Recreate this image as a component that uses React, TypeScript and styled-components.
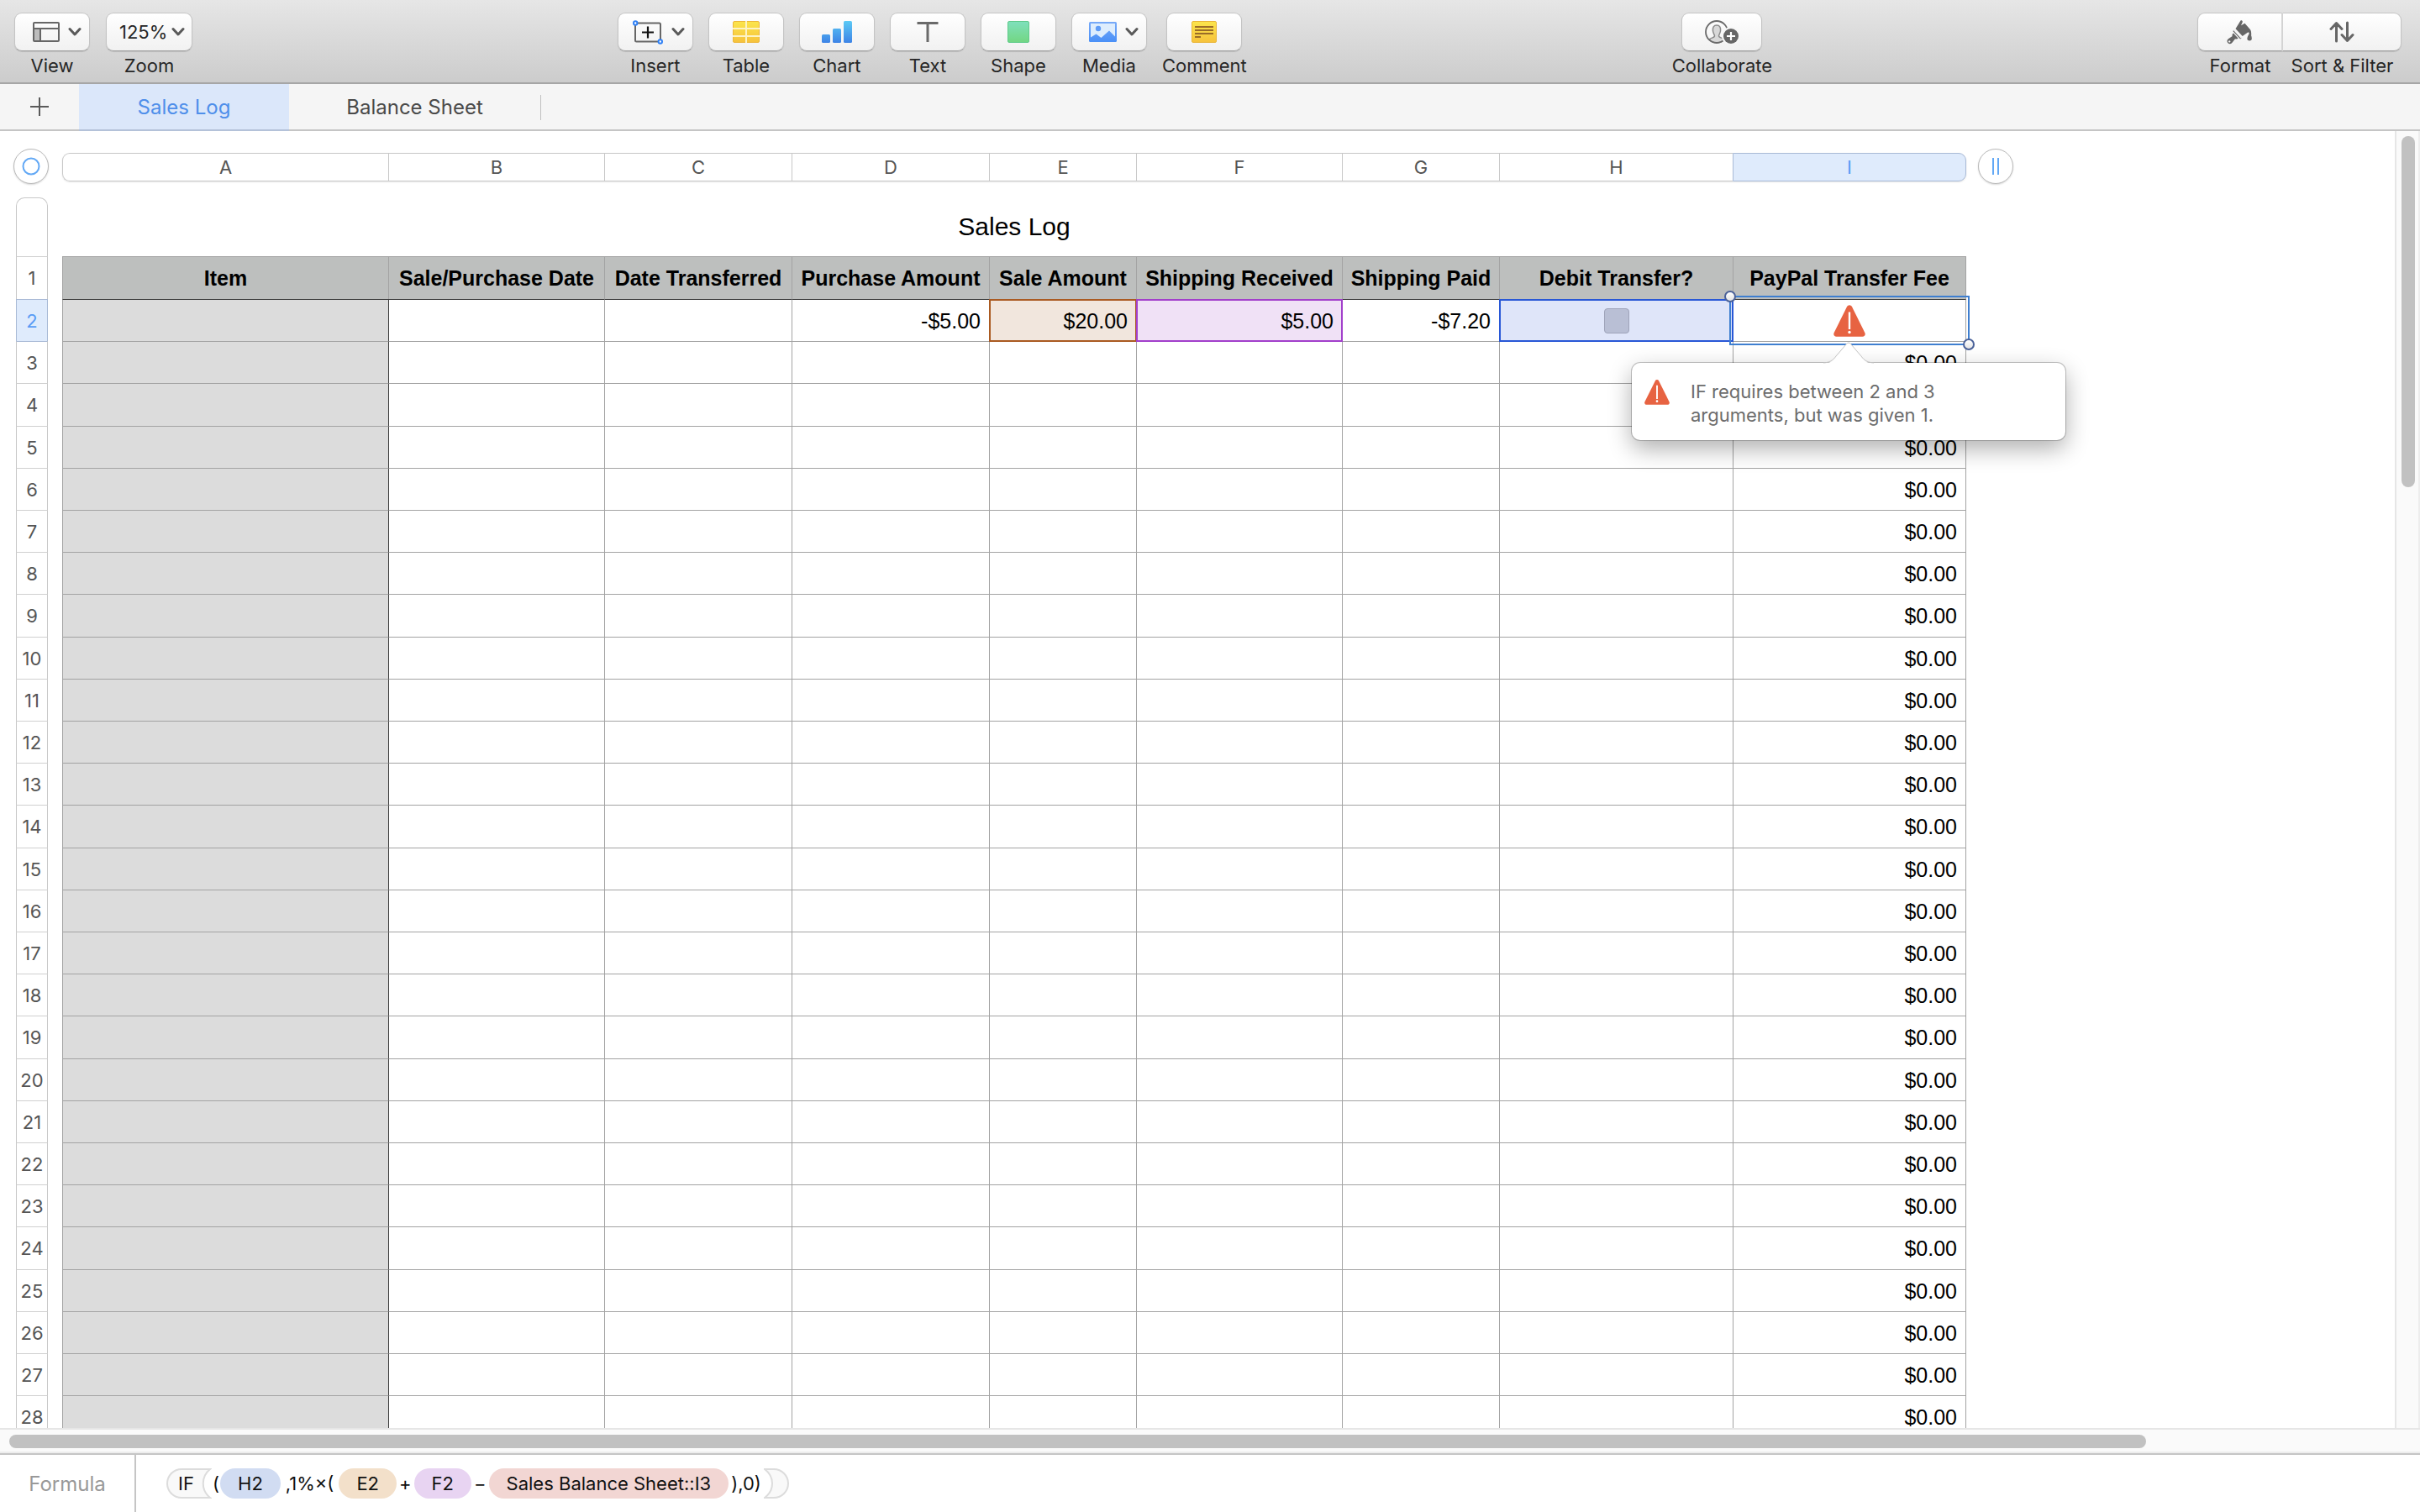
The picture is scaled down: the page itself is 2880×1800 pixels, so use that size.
import React from "react";
import styled, { createGlobalStyle, css } from "styled-components";

const ui = `Inter, "Liberation Sans", sans-serif`;
const sheetFont = `"Liberation Sans", Arial, sans-serif`;

const GlobalStyle = createGlobalStyle`
  *, *::before, *::after { box-sizing: border-box; }
  body { margin: 0; font-family: ${ui}; background: #fff; }
  button, select, input { font: inherit; color: inherit; margin: 0; }
`;

type Column = { letter: string; title: string; width: number };

const columns: Column[] = [
  { letter: "A", title: "Item", width: 388 },
  { letter: "B", title: "Sale/Purchase Date", width: 257 },
  { letter: "C", title: "Date Transferred", width: 223 },
  { letter: "D", title: "Purchase Amount", width: 235 },
  { letter: "E", title: "Sale Amount", width: 175 },
  { letter: "F", title: "Shipping Received", width: 245 },
  { letter: "G", title: "Shipping Paid", width: 187 },
  { letter: "H", title: "Debit Transfer?", width: 278 },
  { letter: "I", title: "PayPal Transfer Fee", width: 278 },
];

const tracks = columns.map((c) => `${c.width}px`).join(" ");
const dataRows = Array.from({ length: 27 }, (_, i) => i + 2);
const rowHeight = (n: number) => (n === 1 || n % 5 === 4 ? 51 : 50);

/* ---------- window ---------- */

const Window = styled.div`
  display: flex;
  flex-direction: column;
  height: 100vh;
  overflow: hidden;
`;

/* ---------- toolbar ---------- */

const Toolbar = styled.header`
  display: flex;
  justify-content: space-between;
  align-items: flex-start;
  flex: none;
  height: 100px;
  padding: 15px 22px 0 17px;
  background: linear-gradient(#e6e6e6, #cccccc);
  border-bottom: 2px solid #a6a6a6;
`;

const Group = styled.div<{ $joined?: boolean }>`
  display: flex;
  gap: ${(p) => (p.$joined ? 0 : 19)}px;
`;

const Tool = styled.button`
  display: flex;
  flex-direction: column;
  align-items: center;
  gap: 4px;
  padding: 0;
  border: 0;
  background: none;
  font-size: 22px;
  line-height: 26px;
  color: #262626;
`;

const faceStyle = css`
  height: 46px;
  background: linear-gradient(#ffffff, #f1f1f1);
  border: 1px solid #c4c4c4;
  border-bottom-color: #a0a0a0;
  border-radius: 9px;
  box-shadow: 0 1px 1px rgba(0, 0, 0, 0.12);
`;

const Face = styled.span<{ $width?: number; $menu?: boolean; $side?: "left" | "right" }>`
  ${faceStyle}
  display: flex;
  align-items: center;
  justify-content: ${(p) => (p.$menu ? "flex-end" : "center")};
  gap: 10px;
  width: ${(p) => p.$width ?? 90}px;
  padding-right: ${(p) => (p.$menu ? 9 : 0)}px;
  ${(p) => p.$side === "left" && css`
    border-radius: 9px 0 0 9px;
    border-right: 2px solid #d6d6d6;
  `}
  ${(p) => p.$side === "right" && css`
    border-radius: 0 9px 9px 0;
    border-left: 0;
  `}
`;

const ZoomField = styled.label`
  display: flex;
  flex-direction: column;
  align-items: center;
  gap: 4px;
  font-size: 22px;
  line-height: 26px;
  color: #262626;
`;

const SelectWrap = styled.span`
  position: relative;
  display: block;
`;

const ZoomSelect = styled.select`
  ${faceStyle}
  display: block;
  appearance: none;
  width: 103px;
  padding: 0 0 0 15px;
`;

const SelectArrow = styled.span`
  position: absolute;
  right: 9px;
  top: 0;
  display: flex;
  align-items: center;
  height: 46px;
  pointer-events: none;
`;

const Chevron = () => (
  <svg width="16" height="12" viewBox="0 0 16 12" fill="none" aria-hidden="true">
    <path d="M2 2.500 8 9l6-6.500" stroke="#5a5a5a" strokeWidth="3" strokeLinecap="round" strokeLinejoin="round" />
  </svg>
);

const ViewIcon = () => (
  <svg width="32" height="24" viewBox="0 0 32 24" fill="none" aria-hidden="true">
    <path d="M1 8h8v15H1z" fill="#bdbdbd" />
    <rect x="1" y="1" width="30" height="22" rx="1" stroke="#666" strokeWidth="2" />
    <path d="M1 8h30M9 8v15" stroke="#666" strokeWidth="2" />
  </svg>
);

const InsertIcon = () => (
  <svg width="36" height="29" viewBox="0 0 36 29" fill="none" aria-hidden="true">
    <rect x="3" y="3.500" width="30" height="22" rx="1.500" stroke="#666" strokeWidth="2" />
    <path d="M18 7.500v14M11 14.500h14" stroke="#111" strokeWidth="2.200" />
    <circle cx="3.200" cy="3.500" r="2.200" fill="#fff" stroke="#2f80f5" strokeWidth="2" />
    <circle cx="32.800" cy="25.500" r="2.200" fill="#fff" stroke="#2f80f5" strokeWidth="2" />
  </svg>
);

const TableIcon = () => (
  <svg width="32" height="26" viewBox="0 0 32 26" aria-hidden="true">
    <defs>
      <linearGradient id="yellow" x2="0" y2="1">
        <stop stopColor="#fbe54b" />
        <stop offset="1" stopColor="#f6c23c" />
      </linearGradient>
    </defs>
    <rect x=".5" y=".5" width="31" height="25" rx="1.500" fill="url(#yellow)" stroke="#edb73a" />
    <path d="M0 9h32M0 18h32M16 0v26" stroke="#fdf3c4" strokeWidth="2" />
  </svg>
);

const ChartIcon = () => (
  <svg width="36" height="26" viewBox="0 0 36 26" aria-hidden="true">
    <defs>
      <linearGradient id="blue" gradientUnits="userSpaceOnUse" x1="0" x2="0" y1="0" y2="26">
        <stop stopColor="#5ccaf5" />
        <stop offset="1" stopColor="#3d83e6" />
      </linearGradient>
    </defs>
    <g fill="url(#blue)">
      <rect y="16" width="10" height="10" rx="1.500" />
      <rect x="13" y="9" width="10" height="17" rx="1.500" />
      <rect x="26" width="10" height="26" rx="1.500" />
    </g>
  </svg>
);

const TextIcon = () => (
  <svg width="26" height="24" viewBox="0 0 26 24" aria-hidden="true">
    <path d="M.5 1.500h25M13 1.500V24" stroke="#6a6a6a" strokeWidth="3" />
  </svg>
);

const ShapeIcon = () => (
  <svg width="26" height="26" viewBox="0 0 26 26" aria-hidden="true">
    <defs>
      <linearGradient id="green" x2="0" y2="1">
        <stop stopColor="#7fe0bd" />
        <stop offset="1" stopColor="#72d682" />
      </linearGradient>
    </defs>
    <rect x=".5" y=".5" width="25" height="25" rx="1.500" fill="url(#green)" stroke="#5fcb8b" />
  </svg>
);

const MediaIcon = () => (
  <svg width="33" height="24" viewBox="0 0 33 24" aria-hidden="true">
    <defs>
      <linearGradient id="photo" x2="0" y2="1">
        <stop stopColor="#78aaf8" />
        <stop offset="1" stopColor="#4a90f7" />
      </linearGradient>
    </defs>
    <rect width="33" height="24" rx="1.500" fill="url(#photo)" />
    <path d="M2 2h29v15.500L24 10.500l-9.500 8.500-6-4.500L2 18.500z" fill="#deedfd" />
    <circle cx="11" cy="8" r="3.200" fill="#5e9bf7" />
  </svg>
);

const CommentIcon = () => (
  <svg width="30" height="26" viewBox="0 0 30 26" aria-hidden="true">
    <rect x=".5" y=".5" width="29" height="25" rx="1.500" fill="url(#yellow)" stroke="#e9b63a" />
    <path d="M4 7h22M4 11h22M4 15h22M4 19h7" stroke="#9a6c28" strokeWidth="2" />
  </svg>
);

const CollaborateIcon = () => (
  <svg width="40" height="28" viewBox="0 0 40 28" fill="none" aria-hidden="true">
    <path
      d="M5 23c2-2 6-2 6.500-4 .2-1.300-1.500-3-2-6-.6-4.500 1-7 4.500-7s5.100 2.500 4.500 7c-.5 3-2.200 4.700-2 6 .5 2 4.500 2 6.500 4-2.300 2.500-5.300 4-9 4s-6.700-1.500-9-4z"
      fill="#d8d8d8"
      stroke="#8a8a8a"
      strokeWidth="1.500"
    />
    <circle cx="14" cy="14" r="13" stroke="#6a6a6a" strokeWidth="1.800" />
    <circle cx="31" cy="19" r="11" fill="#f7f7f7" />
    <circle cx="31" cy="19" r="9" fill="#666" />
    <path d="M31 14v10M26 19h10" stroke="#fff" strokeWidth="2.200" />
  </svg>
);

const FormatIcon = () => (
  <svg width="30" height="29" viewBox="0 0 30 29" aria-hidden="true">
    <g fill="#666">
      <path d="M16.500.6c1.200-.8 2.800.4 2.200 1.800L17 6.200l4.500-2.400 6.300 7.300c1.300 1.700 1.600 4.200 1.300 7.100.5 1.300.8 2.700.7 4.300-.2 2.600-5.200 2.600-5.400 0-.1-2 .9-4 2.300-6.500-.1-1-.6-1.500-1.500-1.400l-6.500 4.400-8.200-8.800z" />
      <path d="M9 11.500 17.800 21l-1.700 1.600L7.300 13z" />
      <path fillRule="evenodd" d="m8 15.500 5.700 6.200c-1.400 1-2.700.8-3.700.5l-3.500 4.600a3.300 3.300 0 1 1-4.600-4.600L6.700 19c-.5-1-.2-2.400 1.300-3.500zM3.200 24.200a1.200 1.200 0 1 0 .01 0z" />
    </g>
    <path d="m8.500 11.500 9 9.800" stroke="#fafafa" strokeWidth="1.500" />
  </svg>
);

const SortIcon = () => (
  <svg width="30" height="26" viewBox="0 0 30 26" fill="none" aria-hidden="true">
    <path
      d="M8.500 24V3M2 9.500 8.500 2.500 15 9.500M21.500 2v21M15 16.500l6.500 7 6.500-7"
      stroke="#666"
      strokeWidth="3"
      strokeLinecap="round"
      strokeLinejoin="round"
    />
  </svg>
);

/* ---------- sheet tabs ---------- */

const TabBar = styled.nav`
  display: flex;
  flex: none;
  height: 56px;
  background: #f5f5f5;
  box-shadow: inset 0 -2px 0 #c5c5c5;
`;

const AddSheet = styled.button`
  display: flex;
  align-items: center;
  justify-content: center;
  width: 94px;
  padding: 0 0 2px;
  border: 0;
  background: none;
`;

const Tab = styled.button<{ $active?: boolean }>`
  min-width: ${(p) => (p.$active ? 250 : 299)}px;
  padding: 2px 0 0;
  border: 0;
  border-bottom: 2px solid ${(p) => (p.$active ? "#b4c2d9" : "#c5c5c5")};
  background: ${(p) => (p.$active ? "#dbe7fa" : "transparent")};
  color: ${(p) => (p.$active ? "#4f8fea" : "#4a4a4a")};
  font-size: 24px;
  line-height: 28px;
`;

const TabDivider = styled.span`
  align-self: center;
  width: 1px;
  height: 30px;
  background: #c0c0c0;
`;

/* ---------- workspace ---------- */

const Workspace = styled.main`
  display: flex;
  flex: 1;
  min-height: 0;
`;

const Canvas = styled.div`
  display: grid;
  grid-template-columns: 44px max-content 44px;
  grid-template-rows: 44px max-content;
  column-gap: 14px;
  row-gap: 14px;
  flex: 1;
  min-width: 0;
  padding: 21px 0 0 16px;
  overflow: hidden;
  background: #fff;
`;

const RoundHandle = styled.button`
  display: flex;
  align-items: center;
  justify-content: center;
  width: 42px;
  height: 42px;
  padding: 0;
  border: 1px solid #b9b9b9;
  border-radius: 50%;
  background: #fff;
  box-shadow: 0 1px 2px rgba(0, 0, 0, 0.15);
`;

const ColumnRuler = styled.div`
  display: grid;
  grid-template-columns: ${tracks};
  align-self: center;
  height: 34px;
  border-radius: 9px;
  box-shadow: 0 1px 2px rgba(0, 0, 0, 0.1);
`;

const ColumnTag = styled.div<{ $active?: boolean }>`
  display: flex;
  align-items: center;
  justify-content: center;
  border: 1px solid ${(p) => (p.$active ? "#a9bad6" : "#c8c8c8")};
  border-right-width: 0;
  background: ${(p) => (p.$active ? "#dfebfc" : "#fff")};
  color: ${(p) => (p.$active ? "#5a9cf5" : "#555")};
  font-size: 22px;
  line-height: 26px;
  &:first-child { border-radius: 9px 0 0 9px; }
  &:last-child { border-radius: 0 9px 9px 0; border-right-width: 1px; }
`;

const RowRuler = styled.div`
  justify-self: center;
  width: 38px;
`;

const RulerCap = styled.div`
  height: 70px;
  border: 1px solid #c8c8c8;
  border-bottom: 0;
  border-radius: 10px 10px 0 0;
`;

const RowTag = styled.div<{ $active?: boolean; $height: number; $afterActive?: boolean }>`
  display: flex;
  align-items: center;
  justify-content: center;
  height: ${(p) => p.$height}px;
  border: 1px solid ${(p) => (p.$active ? "#a9bad6" : "#c8c8c8")};
  border-top-color: ${(p) => (p.$active || p.$afterActive ? "#a9bad6" : "#d0d0d0")};
  border-bottom: 0;
  background: ${(p) => (p.$active ? "#dfebfc" : "#fff")};
  color: ${(p) => (p.$active ? "#5a9cf5" : "#555")};
  font-size: 22px;
  line-height: 28px;
`;

/* ---------- table ---------- */

const Grid = styled.table`
  align-self: start;
  table-layout: fixed;
  width: 2266px;
  border-collapse: separate;
  border-spacing: 0;
  font-family: ${sheetFont};
  font-size: 25px;
  line-height: 30px;
  color: #000;
`;

const Title = styled.caption`
  height: 70px;
  font-size: 30px;
  line-height: 70px;
`;

const Row = styled.tr<{ $height: number }>`
  height: ${(p) => p.$height}px;
`;

const HeadCell = styled.th`
  padding: 0;
  background: #bdbfbe;
  border: 0 solid #a3a3a3;
  border-width: 1px 0 0 1px;
  font-weight: 700;
  white-space: nowrap;
  &:last-child { border-right-width: 1px; }
`;

const Cell = styled.td<{ $first: boolean }>`
  position: relative;
  padding: 0 10px;
  border: 0 solid #a3a3a3;
  border-width: 1px 0 0 1px;
  border-top-color: ${(p) => (p.$first ? "#3c3c3c" : "#a3a3a3")};
  text-align: right;
  &:first-child { background: #dcdcdc; }
  &:nth-child(2) { border-left-color: #3c3c3c; }
  &:last-child { border-right-width: 1px; }
`;

const Reference = styled.div<{ $line: string; $fill: string }>`
  position: absolute;
  inset: -1px;
  z-index: 1;
  display: flex;
  align-items: center;
  justify-content: flex-end;
  padding: 0 9px;
  border: 2px solid ${(p) => p.$line};
  background: ${(p) => p.$fill};
`;

const CellCheckbox = styled.input`
  appearance: none;
  width: 30px;
  height: 30px;
  && { margin: 0 auto; }
  border: 1px solid #9fa4ba;
  border-radius: 4px;
  background: #b9bfd5;
`;

const Selection = styled.div`
  position: absolute;
  inset: -5px;
  z-index: 2;
  display: flex;
  align-items: center;
  justify-content: center;
  border: 2px solid #3f7fd0;
`;

const Knob = styled.span<{ $end?: boolean }>`
  position: absolute;
  width: 14px;
  height: 14px;
  border: 2px solid #4a6199;
  border-radius: 50%;
  background: linear-gradient(#fff, #e4e4e4);
  ${(p) => (p.$end ? "right: -8px; bottom: -8px;" : "left: -8px; top: -8px;")}
`;

const Popover = styled.div`
  position: absolute;
  top: 75px;
  right: -119px;
  z-index: 3;
  display: flex;
  gap: 25px;
  width: 516px;
  padding: 20px 72px 16px 15px;
  border-radius: 10px;
  background: #fff;
  box-shadow: 0 0 0 1px rgba(0, 0, 0, 0.22), 0 10px 28px rgba(0, 0, 0, 0.32);
  color: #6c6c6c;
  font-family: ${ui};
  font-size: 22px;
  line-height: 28px;
  text-align: left;
`;

const PopoverArrow = styled.svg`
  position: absolute;
  left: 50%;
  bottom: 100%;
  transform: translateX(-50%);
  margin-bottom: -2px;
`;

const WarningShape = styled.svg`
  flex: none;
`;

const WarningIcon = ({ size }: { size: number }) => (
  <WarningShape width={size} height={size} viewBox="0 0 38 38" aria-hidden="true">
    <path
      d="M16.200 1.800a3.200 3.200 0 0 1 5.600 0l15.600 31.500c1 2.200-.4 4.400-2.800 4.400H3.400c-2.400 0-3.800-2.200-2.800-4.400z"
      fill="#e76342"
    />
    <path d="M19 8.500V29" stroke="#fff" strokeWidth="2.400" />
    <circle cx="19" cy="32.500" r="1.700" fill="#fff" />
  </WarningShape>
);

/* ---------- scrollbars ---------- */

const VerticalTrack = styled.div`
  flex: none;
  width: 30px;
  padding: 6px 4px 6px 6px;
  border: solid #e6e6e6;
  border-width: 0 2px;
  border-right-color: #ededed;
  background: #fafafa;
`;

const HorizontalTrack = styled.div`
  flex: none;
  height: 32px;
  padding: 6px 15px 4px 11px;
  border-top: 2px solid #e6e6e6;
  border-bottom: 2px solid #c5c5c5;
  background: #fafafa;
  box-shadow: inset 0 -2px 0 #ededed;
`;

const Thumb = styled.div<{ $width?: string; $height?: string }>`
  width: ${(p) => p.$width ?? "16px"};
  height: ${(p) => p.$height ?? "16px"};
  border-radius: 8px;
  background: #c1c1c1;
`;

/* ---------- formula bar ---------- */

const FormulaBar = styled.footer`
  display: flex;
  flex: none;
  height: 68px;
  background: #fff;
`;

const FormulaLabel = styled.div`
  display: flex;
  align-items: center;
  justify-content: center;
  width: 162px;
  padding-top: 2px;
  border-right: 2px solid #c5c5c5;
  color: #999;
  font-size: 24px;
  line-height: 30px;
`;

const Formula = styled.div`
  display: flex;
  align-items: center;
  padding-left: 36px;
  color: #111;
  font-size: 22px;
  line-height: 36px;
  white-space: nowrap;
`;

const FunctionName = styled.span`
  display: flex;
  height: 36px;
`;

const FunctionBody = styled.span`
  width: 36px;
  padding-left: 12px;
  border: 2px solid #dcdcdc;
  border-right: 0;
  border-radius: 18px 0 0 18px;
  background: #f9f9f9;
  line-height: 32px;
`;

const Operator = styled.span<{ $gap?: number }>`
  padding: 0 ${(p) => p.$gap ?? 3}px;
`;

const Token = styled.button<{ $fill: string }>`
  height: 36px;
  padding: 0 21px;
  border: 0;
  border-radius: 18px;
  background: ${(p) => p.$fill};
`;

function cellContent(letter: string, row: number): React.ReactNode {
  // Row 4 has no fee: the error popover of I2 lies over it.
  if (row > 2) return letter === "I" && row !== 4 ? "$0.00" : null;
  switch (letter) {
    case "D":
      return "-$5.00";
    case "E":
      return <Reference $line="#aa5a21" $fill="#f1e6dd">$20.00</Reference>;
    case "F":
      return <Reference $line="#a23fcb" $fill="#f0e1f6">$5.00</Reference>;
    case "G":
      return "-$7.20";
    case "H":
      return (
        <Reference $line="#2857d6" $fill="#dfe5f9">
          <CellCheckbox type="checkbox" aria-label="Debit Transfer?" />
        </Reference>
      );
    case "I":
      return (
        <>
          <Selection>
            <WarningIcon size={38} />
            <Knob />
            <Knob $end />
          </Selection>
          <Popover role="alert">
            <PopoverArrow width="60" height="27" viewBox="0 0 60 27" aria-hidden="true">
              <path d="M0 26c7-.5 11-2.500 15-8L27 3c2-2.500 4-2.500 6 0l12 15c4 5.500 8 7.500 15 8v1H0z" fill="#fff" />
              <path d="M0 25c7-.5 11-2.500 15-8L27 3c2-2.500 4-2.500 6 0l12 14c4 5.500 8 7.500 15 8" fill="none" stroke="#c4c4c4" />
            </PopoverArrow>
            <WarningIcon size={30} />
            <span>IF requires between 2 and 3 arguments, but was given 1.</span>
          </Popover>
        </>
      );
    default:
      return null;
  }
}

const insertTools: { label: string; icon: React.ReactNode; menu?: boolean }[] = [
  { label: "Insert", icon: <InsertIcon />, menu: true },
  { label: "Table", icon: <TableIcon /> },
  { label: "Chart", icon: <ChartIcon /> },
  { label: "Text", icon: <TextIcon /> },
  { label: "Shape", icon: <ShapeIcon /> },
  { label: "Media", icon: <MediaIcon />, menu: true },
  { label: "Comment", icon: <CommentIcon /> },
];

const InsertGroup = styled(Group)`
  gap: 18px;
`;

export default function App() {
  return (
    <Window>
      <GlobalStyle />
      <Toolbar>
        <Group>
          <Tool>
            <Face $menu>
              <ViewIcon />
              <Chevron />
            </Face>
            View
          </Tool>
          <ZoomField>
            <SelectWrap>
              <ZoomSelect defaultValue="125%">
                <option>125%</option>
              </ZoomSelect>
              <SelectArrow>
                <Chevron />
              </SelectArrow>
            </SelectWrap>
            Zoom
          </ZoomField>
        </Group>
        <InsertGroup>
          {insertTools.map((t) => (
            <Tool key={t.label}>
              <Face $menu={t.menu}>
                {t.icon}
                {t.menu && <Chevron />}
              </Face>
              {t.label}
            </Tool>
          ))}
        </InsertGroup>
        <Group>
          <Tool>
            <Face $width={96}>
              <CollaborateIcon />
            </Face>
            Collaborate
          </Tool>
        </Group>
        <Group $joined>
          <Tool>
            <Face $width={102} $side="left">
              <FormatIcon />
            </Face>
            Format
          </Tool>
          <Tool>
            <Face $width={141} $side="right">
              <SortIcon />
            </Face>
            Sort &amp; Filter
          </Tool>
        </Group>
      </Toolbar>

      <TabBar>
        <AddSheet aria-label="Add sheet">
          <svg width="22" height="22" viewBox="0 0 22 22" aria-hidden="true">
            <path d="M11 0v22M0 11h22" stroke="#5a5a5a" strokeWidth="2" />
          </svg>
        </AddSheet>
        <Tab $active>Sales Log</Tab>
        <Tab>Balance Sheet</Tab>
        <TabDivider />
      </TabBar>

      <Workspace>
        <Canvas>
          <RoundHandle aria-label="Select table">
            <svg width="22" height="22" viewBox="0 0 22 22" aria-hidden="true">
              <circle cx="11" cy="11" r="9.500" fill="none" stroke="#62a8f5" strokeWidth="2" />
            </svg>
          </RoundHandle>
          <ColumnRuler>
            {columns.map((c) => (
              <ColumnTag key={c.letter} $active={c.letter === "I"}>
                {c.letter}
              </ColumnTag>
            ))}
          </ColumnRuler>
          <RoundHandle aria-label="Add column">
            <svg width="10" height="20" viewBox="0 0 10 20" aria-hidden="true">
              <path d="M2 0v20M8 0v20" stroke="#62a8f5" strokeWidth="2" />
            </svg>
          </RoundHandle>

          <RowRuler>
            <RulerCap />
            {[1, ...dataRows].map((n) => (
              <RowTag key={n} $height={rowHeight(n)} $active={n === 2} $afterActive={n === 3}>
                {n}
              </RowTag>
            ))}
          </RowRuler>
          <Grid>
            <Title>Sales Log</Title>
            <colgroup>
              {columns.map((c) => (
                <col key={c.letter} style={{ width: c.width }} />
              ))}
            </colgroup>
            <thead>
              <Row $height={rowHeight(1)}>
                {columns.map((c) => (
                  <HeadCell key={c.letter} scope="col">
                    {c.title}
                  </HeadCell>
                ))}
              </Row>
            </thead>
            <tbody>
              {dataRows.map((n) => (
                <Row key={n} $height={rowHeight(n)}>
                  {columns.map((c) => (
                    <Cell key={c.letter} $first={n === 2}>
                      {cellContent(c.letter, n)}
                    </Cell>
                  ))}
                </Row>
              ))}
            </tbody>
          </Grid>
        </Canvas>
        <VerticalTrack>
          <Thumb $height="27.3%" />
        </VerticalTrack>
      </Workspace>
      <HorizontalTrack>
        <Thumb $width="89.1%" />
      </HorizontalTrack>

      <FormulaBar>
        <FormulaLabel>Formula</FormulaLabel>
        <Formula>
          <FunctionName>
            <FunctionBody>IF</FunctionBody>
            <svg width="18" height="36" viewBox="0 0 18 36" aria-hidden="true">
              <path d="M0 1h16C5 10 5 26 16 35H0z" fill="#f9f9f9" />
              <path d="M0 1h16C5 10 5 26 16 35H0" fill="none" stroke="#dcdcdc" strokeWidth="2" />
            </svg>
          </FunctionName>
          <Operator $gap={1}>(</Operator>
          <Token $fill="#d1dcf2">H2</Token>
          <Operator $gap={6}>,1%×(</Operator>
          <Token $fill="#f3e0ca">E2</Token>
          <Operator>+</Operator>
          <Token $fill="#e8d4f2">F2</Token>
          <Operator>−</Operator>
          <Token $fill="#f2d6d3">Sales Balance Sheet::I3</Token>
          <Operator>),0)</Operator>
          <svg width="30" height="36" viewBox="0 0 30 36" aria-hidden="true">
            <path d="M1 1h11a17 17 0 0 1 0 34H1C13 26 13 10 1 1z" fill="#f9f9f9" stroke="#dcdcdc" strokeWidth="2" />
          </svg>
        </Formula>
      </FormulaBar>
    </Window>
  );
}
